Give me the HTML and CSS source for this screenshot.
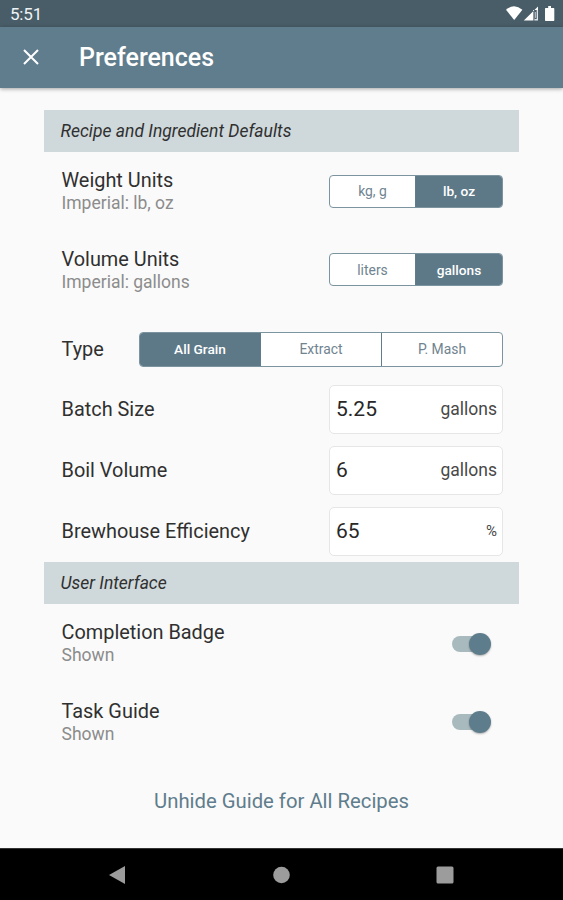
FILE: index.html
```html
<!DOCTYPE html>
<html lang="en">
<head>
<meta charset="utf-8">
<title>Preferences</title>
<link rel="stylesheet" href="styles.css">
</head>
<body>
<div class="screen">
  <div class="status">
    <span class="clock">5:51</span>
    <svg class="status-icons" width="50" height="18" viewBox="0 0 50 18">
      <path fill="#fff" d="M0 3.800Q8.200-3.200 16.400 3.800L8.200 14z"/>
      <path fill="#fff" d="M17.800 14.500 32 .4V4H27v10.500z"/>
      <path fill="#8b9aa2" d="M27 5.500h1.500v9H27z"/>
      <path fill="#dfe5e8" d="M30.700 4H32v10.500h-3.500v-1.500h2.200z"/>
      <path fill="#aab5bb" d="M29 6h1v6h-1z"/>
      <path fill="#fff" d="M39.700 2h2.500V0H45v2h2.600q.7 0 .7.700v11.600q0 .7-.7.700h-7.900q-.7 0-.7-.700V2.700q0-.7.700-.700z"/>
    </svg>
  </div>
  <header class="appbar">
    <svg class="close" width="16" height="16" viewBox="0 0 16 16"><path d="M1 1 15 15M15 1 1 15" stroke="#fff" stroke-width="2"/></svg>
    <h1>Preferences</h1>
  </header>
  <main>
    <h2>Recipe and Ingredient Defaults</h2>
    <div class="row tall">
      <div class="label"><div class="title">Weight Units</div><div class="sub">Imperial: lb, oz</div></div>
      <div class="seg"><span>kg, g</span><span class="on">lb, oz</span></div>
    </div>
    <div class="row tall">
      <div class="label"><div class="title">Volume Units</div><div class="sub">Imperial: gallons</div></div>
      <div class="seg"><span>liters</span><span class="on">gallons</span></div>
    </div>
    <div class="row type">
      <div class="title">Type</div>
      <div class="seg wide"><span class="on">All Grain</span><span>Extract</span><span>P. Mash</span></div>
    </div>
    <div class="row field"><div class="title">Batch Size</div><div class="input"><span>5.25</span><span class="unit">gallons</span></div></div>
    <div class="row field"><div class="title">Boil Volume</div><div class="input"><span>6</span><span class="unit">gallons</span></div></div>
    <div class="row field"><div class="title">Brewhouse Efficiency</div><div class="input"><span>65</span><span class="unit pct">%</span></div></div>
    <h2>User Interface</h2>
    <div class="row tall">
      <div class="label"><div class="title">Completion Badge</div><div class="sub">Shown</div></div>
      <div class="switch"><i></i></div>
    </div>
    <div class="row tall">
      <div class="label"><div class="title">Task Guide</div><div class="sub">Shown</div></div>
      <div class="switch"><i></i></div>
    </div>
    <div class="link">Unhide Guide for All Recipes</div>
  </main>
  <nav>
    <svg width="17" height="18" viewBox="0 0 17 18"><path fill="#9c9c9c" d="M0 9 16 0V18z"/></svg>
    <svg width="17" height="18" viewBox="0 0 17 18"><circle fill="#9c9c9c" cx="8.500" cy="9" r="8.300"/></svg>
    <svg width="18" height="18" viewBox="0 0 18 18"><rect fill="#9c9c9c" x=".5" y=".5" width="17" height="17" rx="1.500"/></svg>
  </nav>
</div>
</body>
</html>
```
FILE: styles.css
```css
* { box-sizing: border-box; }
body { margin: 0; background: #fafafa; font-family: Roboto, sans-serif; color: #303030; }
.screen { width: 563px; height: 900px; display: flex; flex-direction: column; overflow: hidden; }
.status { height: 27px; flex: none; background: #495d68; display: flex; justify-content: space-between; padding: 0 5px 0 10px; align-items: flex-start; }
.clock { color: #eef3f5; font-size: 17px; line-height: 28px; letter-spacing: -.2px; }
.status-icons { margin: 6px 2px 0 0; }
.appbar { height: 61px; flex: none; background: #607d8d; display: flex; align-items: center; padding-left: 23px; box-shadow: 0 1px 4px rgba(0,0,0,.35); z-index: 1; }
.close { position: relative; top: -.5px; }
h1 { margin: 0 0 0 40px; color: #fff; font-size: 25px; font-weight: 500; line-height: 30px; }
main { flex: 1; padding: 22px 44px 0; }
h2 { margin: 0; height: 42px; line-height: 43px; padding-left: 16.500px; background: #cfd8db; font-size: 17.500px; font-weight: 400; font-style: italic; }
.row { display: flex; justify-content: space-between; align-items: center; padding: 0 16px 0 17.500px; }
.tall { height: 79px; }
.tall + .tall { height: 78px; }
.type { height: 70px; padding-top: 10px; }
.field { height: 61px; padding-bottom: 1px; }
.title { font-size: 19.900px; line-height: 24px; }
.type .title, .field .title { padding-top: 2px; }
.sub { font-size: 17.500px; line-height: 21px; color: #8c8c8c; }
.seg { width: 174px; height: 33px; display: flex; border: 1px solid #7c949f; border-radius: 4px; background: #fff; overflow: hidden; }
.tall .seg { margin-top: -1px; }
.seg span { flex: 1; display: flex; align-items: center; justify-content: center; font-size: 13.900px; color: #6f8490; }
.seg span + span { border-left: 1px solid #607d8b; }
.tall .seg span:first-child { flex: 0 0 85px; }
.seg .on { background: #5d7988; color: #fff; font-weight: 500; font-size: 13.700px; }
.wide { width: 364px; height: 35px; }
.input { width: 174px; height: 49px; border: 1px solid #e6e6e6; border-radius: 5px; background: #fff; display: flex; justify-content: space-between; align-items: center; padding: 0 5px 0 6px; font-size: 21px; color: #282828; }
.unit { font-size: 17.500px; color: #484848; }
.pct { font-size: 15px; }
.switch { width: 39px; height: 22px; margin-right: 12px; display: flex; align-items: center; justify-content: flex-end; position: relative; }
.switch::before { content: ""; position: absolute; left: 0; top: 3px; width: 34px; height: 16px; border-radius: 8px; background: #a9babf; }
.switch i { position: relative; width: 22px; height: 22px; border-radius: 50%; background: #5e7d8c; box-shadow: 0 1px 2px rgba(0,0,0,.3); }
.link { height: 79px; line-height: 80px; text-align: center; font-size: 20.300px; color: #5f7d8c; }
nav { height: 52px; flex: none; background: #000; border-top: 1px solid #333; display: flex; justify-content: space-between; align-items: center; padding: 0 109px; }
```
